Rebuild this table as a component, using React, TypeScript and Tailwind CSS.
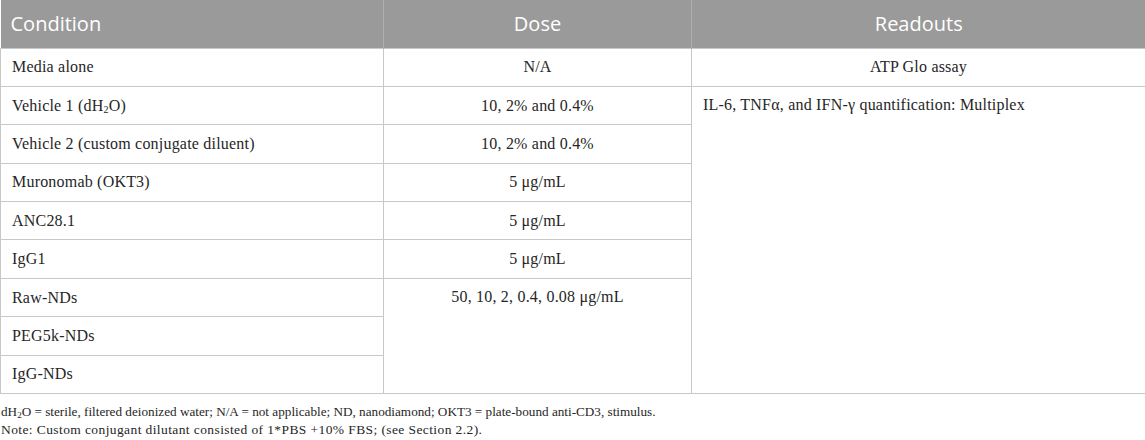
const serif = "font-['Liberation_Serif',serif]";

const cell = "border border-[#c8c8c8] px-[11px] h-[38.4px] align-middle leading-[20px]";

export default function App() {
  return (
    <div className={`w-[1145px] h-[440px] bg-white text-[#262626] ${serif}`}>
      <table className="w-[1145px] border-collapse table-fixed text-[16px] tracking-[0.2px]">
        <colgroup>
          <col className="w-[383px]" />
          <col className="w-[308px]" />
          <col className="w-[454px]" />
        </colgroup>
        <thead>
          <tr className="bg-[#9a9a9a] text-white font-['Open_Sans',sans-serif] text-[20px] tracking-normal h-[48px]">
            <th className="border-r border-[#b0b0b0] px-[10px] text-left font-normal">Condition</th>
            <th className="border-r border-[#b0b0b0] font-normal text-center">Dose</th>
            <th className="font-normal text-center">Readouts</th>
          </tr>
        </thead>
        <tbody>
          <tr>
            <td className={cell}>Media alone</td>
            <td className={`${cell} text-center`}>N/A</td>
            <td className={`${cell} text-center`}>ATP Glo assay</td>
          </tr>
          <tr>
            <td className={cell}>
              Vehicle 1 (dH<sub className="text-[10px]">2</sub>O)
            </td>
            <td className={`${cell} text-center`}>10, 2% and 0.4%</td>
            <td rowSpan={8} className={`${cell} align-top pt-[8px]`}>
              IL-6, TNFα, and IFN-γ quantification: Multiplex
            </td>
          </tr>
          <tr>
            <td className={cell}>Vehicle 2 (custom conjugate diluent)</td>
            <td className={`${cell} text-center`}>10, 2% and 0.4%</td>
          </tr>
          <tr>
            <td className={cell}>Muronomab (OKT3)</td>
            <td className={`${cell} text-center`}>5 μg/mL</td>
          </tr>
          <tr>
            <td className={cell}>ANC28.1</td>
            <td className={`${cell} text-center`}>5 μg/mL</td>
          </tr>
          <tr>
            <td className={cell}>IgG1</td>
            <td className={`${cell} text-center`}>5 μg/mL</td>
          </tr>
          <tr>
            <td className={cell}>Raw-NDs</td>
            <td rowSpan={3} className={`${cell} text-center align-top pt-[8px]`}>
              50, 10, 2, 0.4, 0.08 μg/mL
            </td>
          </tr>
          <tr>
            <td className={cell}>PEG5k-NDs</td>
          </tr>
          <tr>
            <td className={cell}>IgG-NDs</td>
          </tr>
        </tbody>
      </table>
      {/* Table footnotes */}
      <div className="text-[13.2px] leading-[18px] pt-[9px] pl-[1px]">
        <p>
          dH<sub className="text-[9px]">2</sub>O = sterile, filtered deionized water; N/A = not applicable; ND, nanodiamond; OKT3 = plate-bound anti-CD3, stimulus.
        </p>
        <p className="text-[13.5px] tracking-[0.4px]">
          Note: Custom conjugant dilutant consisted of 1*PBS +10% FBS; (see Section 2.2).
        </p>
      </div>
    </div>
  );
}
